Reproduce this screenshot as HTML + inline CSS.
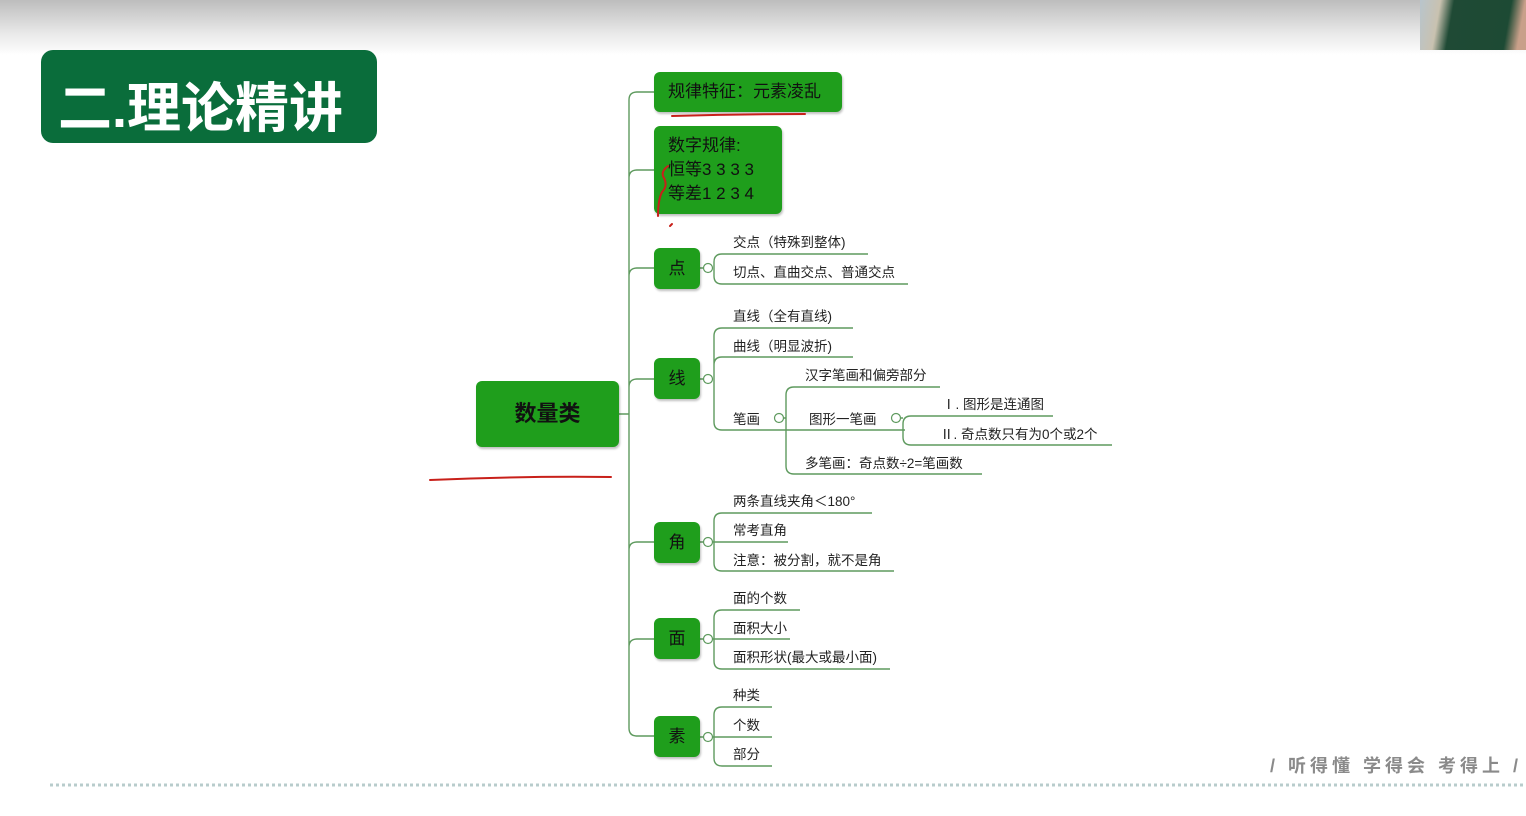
<!DOCTYPE html>
<html><head><meta charset="utf-8"><style>
body{margin:0;width:1526px;height:816px;overflow:hidden;background:#fff;position:relative;font-family:"Liberation Sans","Noto Sans CJK SC",sans-serif}
.a{position:absolute;white-space:nowrap}
.t{font-size:13.5px;color:#222}
.n{position:absolute;background:#1f9e1c;border-radius:6px;box-shadow:1px 2px 2px rgba(0,0,0,.25);color:#111;font-size:17px}
</style></head><body>
<div class="a" style="left:0;top:0;width:1526px;height:55px;background:linear-gradient(#bdbdbd,#e8e8e8 60%,#fff)"></div>
<div class="a" style="left:1420px;top:0;width:106px;height:50px;background:linear-gradient(100deg,#b8c4cc 0,#c9c2b0 18%,#1f4a35 30%,#1d4a34 80%,#c9a08a 92%)"></div>
<div class="a" style="left:41px;top:50px;width:336px;height:93px;background:#0a6d3b;border-radius:12px"></div>
<div class="a" style="left:58px;top:64px;font-size:54px;font-weight:bold;color:#fff">二.理论精讲</div>

<svg class="a" style="left:0;top:0" width="1526" height="816">
<g fill="none" stroke="#5e9a5e" stroke-width="1.4">
<path d="M619 414H629M629 100V728M629 100Q629 92 637 92H654M629 178Q629 170 637 170H654M629 276Q629 268 637 268H654M629 387Q629 379 637 379H654M629 550Q629 542 637 542H654M629 647Q629 639 637 639H654M629 728Q629 736 637 736H654"/>
<path d="M700 268H704M868 254H722Q714 254 714 262V276Q714 284 722 284H908"/>
<path d="M700 379H704M853 328H722Q714 328 714 336V422Q714 430 722 430H905M853 357H722Q714 357 714 365"/>
<path d="M784 418H786M940 387H794Q786 387 786 395V466Q786 474 794 474H982"/>
<path d="M901 418H903M1053 416H911Q903 416 903 424V437Q903 445 911 445H1112"/>
<path d="M700 542H788M872 513H722Q714 513 714 521V563Q714 571 722 571H894"/>
<path d="M700 639H790M800 610H722Q714 610 714 618V661Q714 669 722 669H890"/>
<path d="M700 737H772M772 707H722Q714 707 714 715V758Q714 766 722 766H772"/>
</g>
<g fill="#fff" stroke="#5e9a5e" stroke-width="1.2">
<circle cx="708" cy="268" r="4.5"/><circle cx="708" cy="379" r="4.5"/><circle cx="708" cy="542" r="4.5"/><circle cx="708" cy="639" r="4.5"/><circle cx="708" cy="737" r="4.5"/><circle cx="779" cy="418" r="4.5"/><circle cx="896" cy="418" r="4.5"/>
</g>
<line x1="50" y1="785" x2="1526" y2="785" stroke="#b8cccc" stroke-width="3" stroke-dasharray="3 3"/>
</svg>

<div class="n" style="left:476px;top:381px;width:143px;height:66px;font-size:22px;font-weight:bold;line-height:66px;text-align:center">数量类</div>
<div class="n" style="left:654px;top:72px;width:188px;height:40px;line-height:40px;padding-left:14px;box-sizing:border-box">规律特征：元素凌乱</div>
<div class="n" style="left:654px;top:126px;width:128px;height:88px;padding:8px 0 0 14px;box-sizing:border-box;line-height:24px">数字规律:<br>恒等3 3 3 3<br>等差1 2 3 4</div>
<div class="n" style="left:654px;top:248px;width:46px;height:41px;line-height:41px;text-align:center">点</div>
<div class="n" style="left:654px;top:358px;width:46px;height:41px;line-height:41px;text-align:center">线</div>
<div class="n" style="left:654px;top:522px;width:46px;height:41px;line-height:41px;text-align:center">角</div>
<div class="n" style="left:654px;top:618px;width:46px;height:41px;line-height:41px;text-align:center">面</div>
<div class="n" style="left:654px;top:716px;width:46px;height:41px;line-height:41px;text-align:center">素</div>

<div class="a t" style="left:733px;top:231px">交点（特殊到整体)</div>
<div class="a t" style="left:733px;top:261px">切点、直曲交点、普通交点</div>
<div class="a t" style="left:733px;top:305px">直线（全有直线)</div>
<div class="a t" style="left:733px;top:335px">曲线（明显波折)</div>
<div class="a t" style="left:733px;top:408px">笔画</div>
<div class="a t" style="left:805px;top:364px">汉字笔画和偏旁部分</div>
<div class="a t" style="left:809px;top:408px">图形一笔画</div>
<div class="a t" style="left:942px;top:393px">Ⅰ. 图形是连通图</div>
<div class="a t" style="left:940px;top:423px">Ⅱ. 奇点数只有为0个或2个</div>
<div class="a t" style="left:805px;top:452px">多笔画：奇点数÷2=笔画数</div>
<div class="a t" style="left:733px;top:490px">两条直线夹角＜180°</div>
<div class="a t" style="left:733px;top:519px">常考直角</div>
<div class="a t" style="left:733px;top:549px">注意：被分割，就不是角</div>
<div class="a t" style="left:733px;top:587px">面的个数</div>
<div class="a t" style="left:733px;top:617px">面积大小</div>
<div class="a t" style="left:733px;top:646px">面积形状(最大或最小面)</div>
<div class="a t" style="left:733px;top:684px">种类</div>
<div class="a t" style="left:733px;top:714px">个数</div>
<div class="a t" style="left:733px;top:743px">部分</div>

<div class="a" style="left:1270px;top:752px;font-size:18px;font-weight:bold;color:#8a8a8a;letter-spacing:4px">/ 听得懂 学得会 考得上 /</div>

<svg class="a" style="left:0;top:0" width="1526" height="816">
<g fill="none" stroke="#c8201a" stroke-width="2" stroke-linecap="round">
<path d="M672 116Q740 114 805 114"/>
<path d="M430 480Q520 476 611 477"/>
<path d="M668 166Q660 172 664 178Q668 186 662 192Q658 200 658 216"/>
<path d="M670 226L672 224"/>
</g>
</svg>
</body></html>
